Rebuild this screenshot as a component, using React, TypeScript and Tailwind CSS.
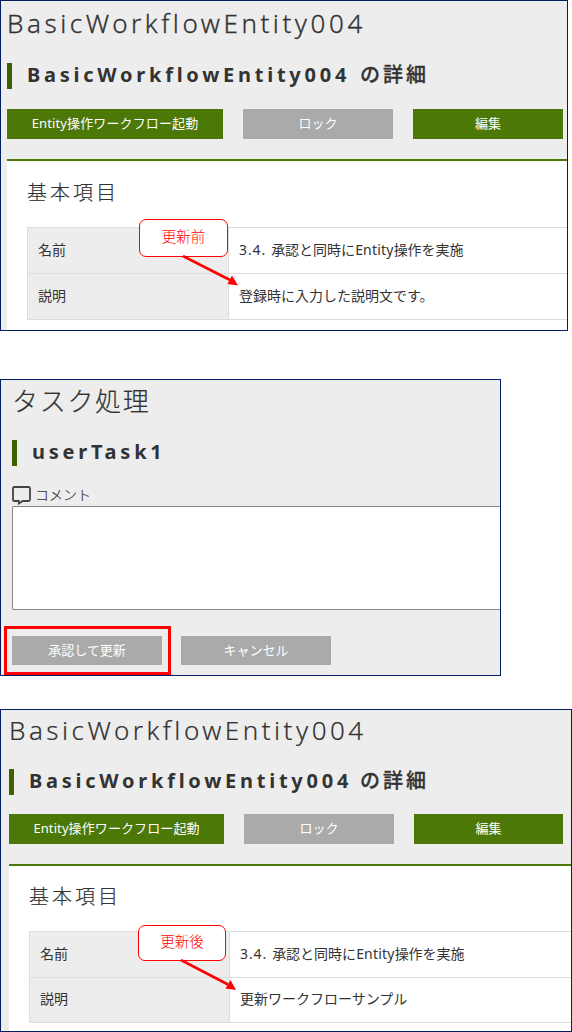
import React from "react";

const fontStack = "font-['Noto_Sans','Noto_Sans_CJK_JP',sans-serif]";

type ButtonProps = { className: string; label: string; textClass?: string };

function ActionButton({ className, label, textClass = "" }: ButtonProps) {
  return (
    <button className={`flex items-center justify-center whitespace-nowrap pb-px text-[13px] leading-none text-white ${className}`}>
      <span className={textClass}>{label}</span>
    </button>
  );
}

function Heading({ latin, rest, restClass = "" }: { latin: string; rest?: string; restClass?: string }) {
  return (
    <h2 className="flex h-[26px] items-center border-l-[5px] border-[#3f6100] pb-[2px] pl-[15px] text-xl leading-[24px] font-bold whitespace-nowrap text-[#333]">
      <span className="tracking-[3.75px]">{latin}</span>
      {rest && <span className={`font-medium tracking-[3px] [-webkit-text-stroke:0.3px_#333] ${restClass}`}>{rest}</span>}
    </h2>
  );
}

function Callout({ label, className, arrow }: { label: string; className: string; arrow: React.ReactNode }) {
  return (
    <div className={`absolute ${className}`}>
      <div className="flex h-full items-center justify-center rounded-[7px] border border-[#f00] bg-white pb-[3px] text-[14.5px] leading-none font-light text-[#f00]">
        {label}
      </div>
      {arrow}
    </div>
  );
}

type RowProps = { name: string; value: React.ReactNode; size: string; head: string };

function Row({ name, value, size, head }: RowProps) {
  return (
    <div className={`flex border-b border-l border-[#ddd] text-sm ${size}`}>
      <div className={`flex shrink-0 items-center border-r border-[#ddd] bg-[#ededed] pb-[2px] pl-[10px] ${head}`}>{name}</div>
      <div className="flex items-center pb-[2px] pl-[10px] whitespace-nowrap">{value}</div>
    </div>
  );
}

const nameValue = (
  <>
    <span className="tracking-[0.9px]">3.4.</span>
    <span className="ml-[5px]">承認と同時に</span>
    <span className="tracking-[0.2px]">Entity</span>
    <span>操作を実施</span>
  </>
);

export default function App() {
  return (
    <main className={`flex h-[1032px] w-[572px] flex-col items-start overflow-hidden bg-white text-[#333] ${fontStack}`}>
      <section className="relative flex h-[331px] w-[568px] shrink-0 flex-col border border-[#001f60] bg-[#ededed] pl-[6px]">
        <h1 className="h-[62px] pt-[2px] text-[26px] leading-[40px] font-light tracking-[3.55px] whitespace-nowrap [-webkit-text-stroke:0.3px_#333]">BasicWorkflowEntity004</h1>
        <Heading latin="BasicWorkflowEntity004" rest="の詳細" restClass="ml-[10px]" />
        <div className="mt-[20px] flex gap-5">
          <ActionButton className="h-[30px] w-[216px] bg-[#4c7808]" label="Entity操作ワークフロー起動" textClass="tracking-[0.13px]" />
          <ActionButton className="h-[30px] w-[150px] bg-[#aaa]" label="ロック" />
          <ActionButton className="h-[30px] w-[150px] bg-[#4c7808]" label="編集" />
        </div>
        <div className="mt-[20px] flex-1 border-t-2 border-[#4c7808] bg-white pl-5">
          <h3 className="h-[66px] pt-[17px] text-xl leading-[30px] font-light tracking-[3px] [-webkit-text-stroke:0.2px_#333]">基本項目</h3>
          <div className="border-t border-[#ddd]">
            <Row name="名前" value={nameValue} size="h-[46px]" head="w-[201px]" />
            <Row name="説明" value="登録時に入力した説明文です。" size="h-[46px]" head="w-[201px]" />
          </div>
        </div>
        <Callout
          label="更新前"
          className="top-[218px] left-[138px] h-[38px] w-[89px]"
          arrow={
            <svg className="absolute top-[36px] left-[43px]" width="57" height="32" viewBox="0 0 57 32">
              <path d="M1 1L48 25" stroke="#f00" strokeWidth="2.6" />
              <path d="M50 20.5L56 30.5L45.5 29Z" fill="#f00" />
            </svg>
          }
        />
      </section>

      <section className="relative mt-[48px] flex h-[297px] w-[501px] shrink-0 flex-col border border-[#001f60] bg-[#ededed] pl-[11px]">
        <h1 className="h-[60px] pt-[1px] text-[26px] leading-[40px] font-light tracking-[1.7px] whitespace-nowrap [-webkit-text-stroke:0.2px_#333]">タスク処理</h1>
        <Heading latin="userTask1" />
        <div className="mt-[19px] flex h-[21px] items-center text-sm">
          <svg width="19" height="19" viewBox="0 0 19 19" fill="none" stroke="#444" strokeWidth="1.8">
            <path d="M2.4 1H16.6Q18 1 18 2.4V13.6Q18 15 16.6 15H10.8L6.8 17.5V15H2.4Q1 15 1 13.6V2.4Q1 1 2.4 1Z" />
          </svg>
          <span className="ml-[4px] pb-[2px] font-light [-webkit-text-stroke:0.15px_#333]">コメント</span>
        </div>
        <div className="h-[104px] rounded-l-[2px] border border-r-0 border-[#858585] bg-white" />
        <div className="mt-[26px] flex gap-[19px]">
          <ActionButton className="h-[29px] w-[150px] bg-[#aaa]" label="承認して更新" />
          <ActionButton className="h-[29px] w-[150px] bg-[#aaa]" label="キャンセル" />
        </div>
        <div className="absolute top-[246px] left-[3px] h-[49px] w-[167px] border-[3px] border-[#f00]" />
      </section>

      <section className="relative mt-[33px] flex h-[323px] w-[572px] shrink-0 flex-col border border-[#001f60] bg-[#ededed] pl-[8px]">
        <h1 className="h-[59px] text-[26px] leading-[40px] font-light tracking-[3.5px] whitespace-nowrap [-webkit-text-stroke:0.2px_#333]">BasicWorkflowEntity004</h1>
        <Heading latin="BasicWorkflowEntity004" rest="の詳細" restClass="ml-[8px]" />
        <div className="mt-[19px] flex">
          <ActionButton className="h-[30px] w-[215px] bg-[#4c7808]" label="Entity操作ワークフロー起動" textClass="tracking-[0.1px]" />
          <ActionButton className="ml-[20px] h-[30px] w-[150px] bg-[#aaa]" label="ロック" />
          <ActionButton className="ml-[20px] h-[30px] w-[149px] bg-[#4c7808]" label="編集" />
        </div>
        <div className="mt-[20px] flex-1 border-t-2 border-[#4c7808] bg-white pl-5">
          <h3 className="h-[65px] pt-[16px] text-xl leading-[30px] font-light tracking-[3px] [-webkit-text-stroke:0.2px_#333]">基本項目</h3>
          <div className="border-t border-[#ddd]">
            <Row name="名前" value={nameValue} size="h-[46px]" head="w-[200px]" />
            <Row name="説明" value="更新ワークフローサンプル" size="h-[45px]" head="w-[200px]" />
          </div>
        </div>
        <Callout
          label="更新後"
          className="top-[215px] left-[137px] h-[36px] w-[88px]"
          arrow={
            <svg className="absolute top-[34px] left-[42px]" width="57" height="33" viewBox="0 0 57 33">
              <path d="M1 1L48 25.5" stroke="#f00" strokeWidth="2.6" />
              <path d="M50.5 21L56 31L45.5 29.5Z" fill="#f00" />
            </svg>
          }
        />
      </section>
    </main>
  );
}
